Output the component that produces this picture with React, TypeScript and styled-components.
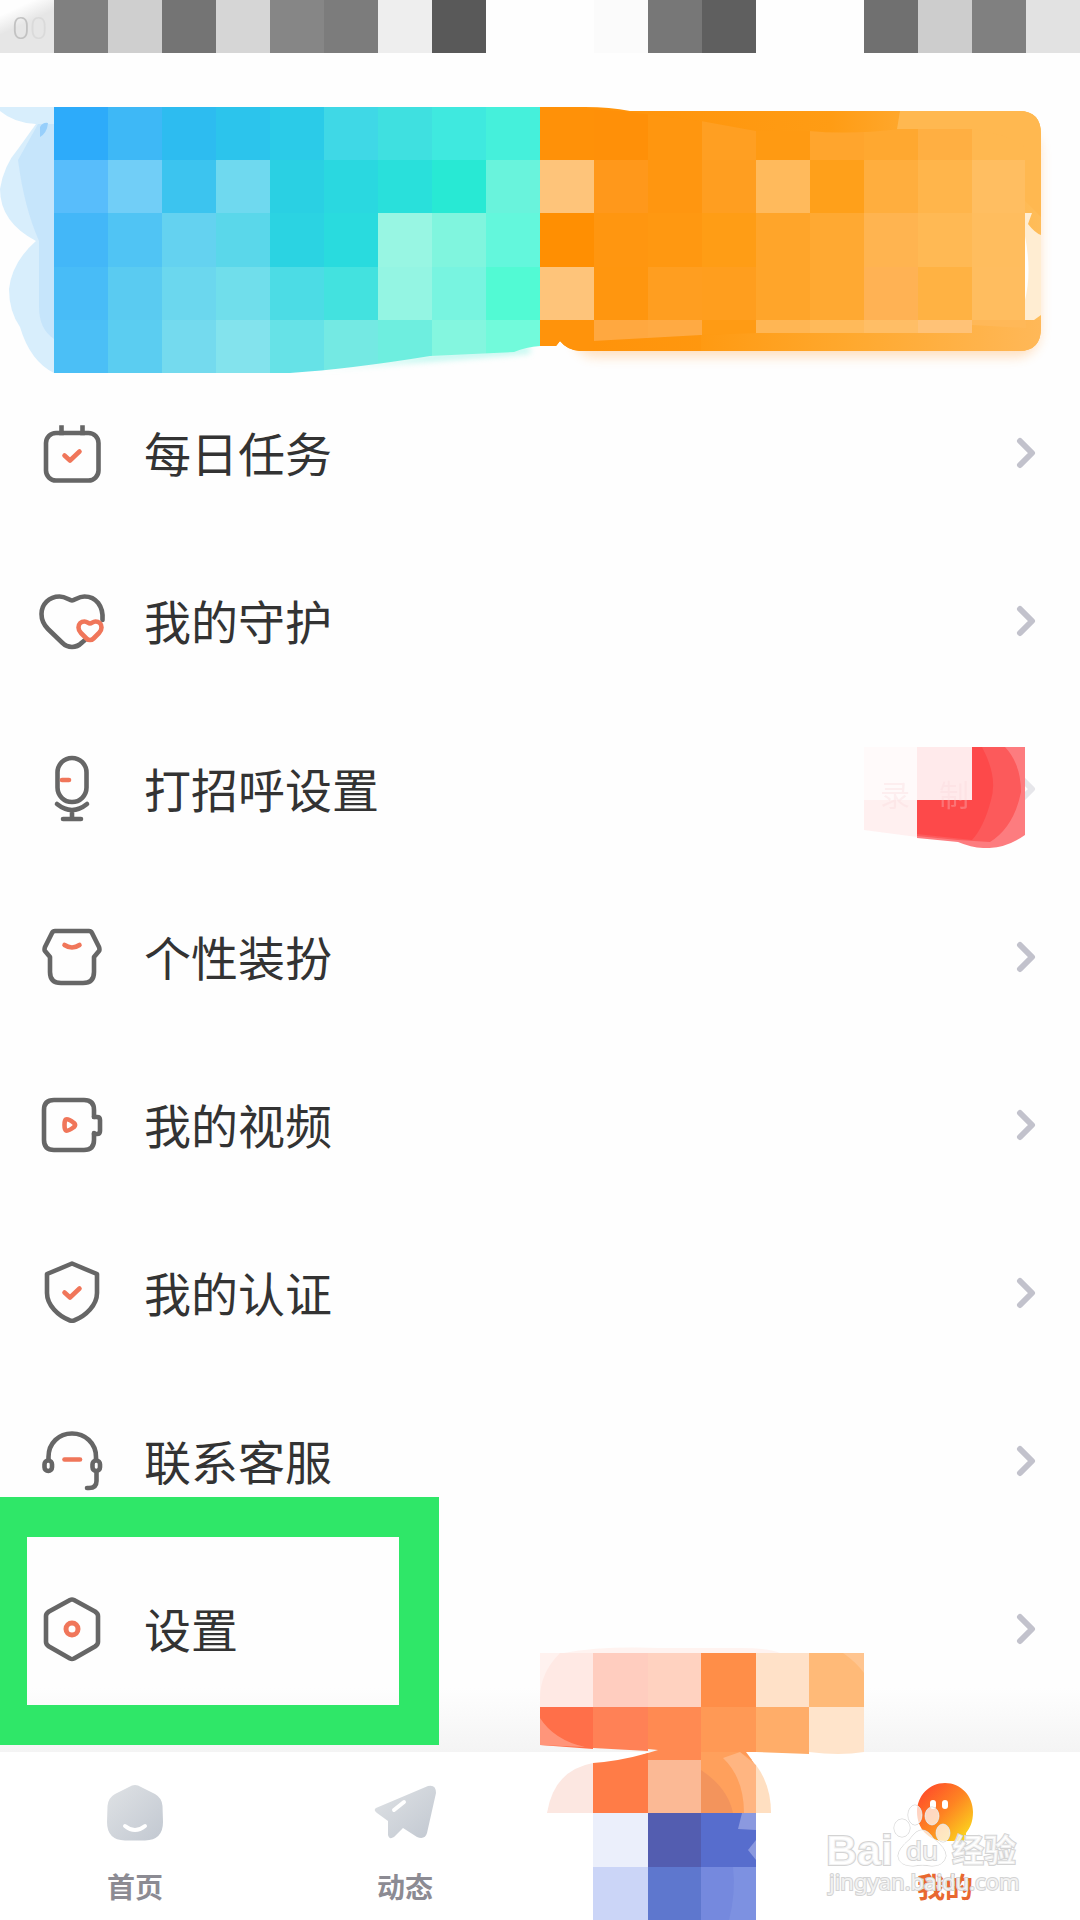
import React from 'react';
import styled, { createGlobalStyle } from 'styled-components';

const GlobalStyle = createGlobalStyle`
  *, *::before, *::after { box-sizing: border-box; }
  body {
    margin: 0;
    background: #fefefe;
    color: #333333;
    font-family: "Noto Sans CJK SC", "Noto Sans", sans-serif;
  }
`;

const Page = styled.div`
  position: relative;
  display: flex;
  flex-direction: column;
  min-height: 100vh;
  overflow: hidden;
`;

const StatusBar = styled.header`
  position: relative;
  display: grid;
  grid-template-columns: repeat(20, 1fr);
  height: 53px;
`;

const StatusCell = styled.div<{ $tone: string }>`
  background: ${(p) => p.$tone};
`;

const Clock = styled.span`
  position: absolute;
  left: 12px;
  top: 8px;
  font: 300 32px/40px Roboto, sans-serif;
  background: linear-gradient(to right, #c2c2c2 16px, #dadada 20px);
  background-clip: text;
  color: transparent;
`;

const Banner = styled.svg`
  position: relative;
  display: block;
  width: 100%;
  height: 262px;
  margin-top: 54px;
  overflow: visible;
`;

const Content = styled.main`
  flex: 1;
  padding-bottom: 39px;
  background: linear-gradient(to top, #f4f4f4, #fefefe 64px);
`;

const Menu = styled.ul`
  list-style: none;
  margin: 0;
  padding: 0;
`;

const MenuItem = styled.li`
  position: relative;
`;

const MenuButton = styled.button`
  display: flex;
  align-items: center;
  width: 100%;
  height: 168px;
  padding: 0 36px;
  border: 0;
  background: none;
  color: inherit;
  font: inherit;
  text-align: left;
  cursor: pointer;
`;

const MenuIcon = styled.svg`
  flex: none;
  width: 72px;
  height: 72px;
  fill: none;
  stroke: #666666;
  stroke-width: 4.6;
  stroke-linecap: round;
  stroke-linejoin: round;

  .accent { stroke: #f0765a; }
`;

const MenuLabel = styled.span`
  flex: 1;
  margin-left: 36px;
  padding-bottom: 2px;
  font-size: 47px;
  line-height: 68px;
`;

const Chevron = styled.svg<{ $faint?: boolean }>`
  flex: none;
  width: 30px;
  height: 36px;
  fill: none;
  stroke: ${(p) => (p.$faint ? '#e6e6ea' : '#c2c2cc')};
  stroke-width: 6;
  stroke-linecap: round;
  stroke-linejoin: round;
`;

const Badge = styled.svg`
  position: absolute;
  top: 42px;
  right: 55px;
  width: 161px;
  height: 101px;
  pointer-events: none;
`;

const Highlight = styled.div`
  position: absolute;
  top: -48px;
  left: 0;
  width: 439px;
  height: 248px;
  border: solid #2fe768;
  border-width: 40px 40px 40px 27px;
  pointer-events: none;
`;

const TabBar = styled.nav`
  position: relative;
  display: grid;
  grid-template-columns: repeat(4, 1fr);
  height: 168px;
  background: #ffffff;
`;

const Tab = styled.a<{ $active?: boolean }>`
  display: flex;
  flex-direction: column;
  align-items: center;
  gap: 20px;
  padding-top: 28px;
  color: ${(p) => (p.$active ? '#e86830' : '#8c8b93')};
  font-size: 28px;
  font-weight: 700;
  line-height: 40px;
  text-decoration: none;
`;

const TabIcon = styled.svg`
  width: 66px;
  height: 66px;
`;

const TabCover = styled.svg`
  position: absolute;
  left: 50%;
  bottom: 0;
  width: 324px;
  height: 272px;
  overflow: visible;
  pointer-events: none;
`;

const Watermark = styled.svg`
  position: absolute;
  right: 56px;
  bottom: 27px;
  width: 200px;
  height: 104px;
  overflow: visible;
  pointer-events: none;
`;

const STATUS_TONES = [
  'linear-gradient(155deg, #fefefe 20%, #e6e6e6 45%)', '#808080', '#cfcfcf', '#747474', '#d6d6d6',
  '#868686', '#7c7c7c', '#eeeeee', '#595959', '#fefefe',
  '#fefefe', '#fbfbfb', '#777777', '#5f5f5f', '#fefefe',
  '#fefefe', '#707070', '#cdcdcd', '#808080', '#e2e2e2',
];

const ROW_EDGES = [0, 53, 106, 160, 213, 266];

const BLUE = [
  ['#2dabfa', '#3eb8f6', '#2dbcf0', '#2cc4ec', '#2bcbe8', '#3fd8e6', '#3fe0e0', '#3fe9df', '#45f0db'],
  ['#58bdfb', '#71cef7', '#3cc4ef', '#6fd9ef', '#2ad0e3', '#2ad8e0', '#29e0db', '#28e9d4', '#69f3dc'],
  ['#43b7f8', '#50c4f4', '#64d2f0', '#5ad7ea', '#2bd3e2', '#29dbde', '#98f6e3', '#80f5de', '#63f7dc'],
  ['#48bcf7', '#5acbf1', '#6bd7ee', '#70deeb', '#4cdce5', '#43e2df', '#94f5e3', '#78f4e0', '#52fad4'],
  ['#4bbff6', '#5bcdf1', '#74daee', '#83e3ed', '#66e2e7', '#74e9e3', '#6eeedf', '#84f6df', '#72fadb'],
];

const ORANGE = [
  ['#ff9108', '#ff9008', '#ff960f', '#ff9f22', '#ff9a12', '#ffa52d', '#ffa830', '#ffaf42', '#ffb850'],
  ['#fec47a', '#ff981b', '#ff9610', '#ff9e20', '#ffba5c', '#ffa01a', '#ffae3e', '#ffb54b', '#ffbe61'],
  ['#ff8f02', '#ff9610', '#ff9811', '#ff9d15', '#ffa52a', '#ffa932', '#ffb450', '#ffb954', '#ffbd5e'],
  ['#fec47a', '#ff960f', '#ff9e20', '#ff9e1e', '#ffa52a', '#ffa932', '#ffb254', '#ffb243', '#ffbd5f'],
  ['#ff930b', '#ffa840', '#ffaa43', '#ff9b14', '#ffb654', '#ffba5a', '#ffbe66', '#ffc277', '#ffb858'],
];

function Tiles({ rows, left }: { rows: string[][]; left: number }) {
  return (
    <>
      {rows.map((row, r) =>
        row.map((fill, c) => (
          <rect
            key={`${r}-${c}`}
            x={left + c * 54}
            y={ROW_EDGES[r]}
            width={54}
            height={ROW_EDGES[r + 1] - ROW_EDGES[r]}
            fill={fill}
            shapeRendering="crispEdges"
          />
        )),
      )}
    </>
  );
}

function BannerArt() {
  return (
    <Banner viewBox="0 0 1080 262" preserveAspectRatio="none" aria-hidden="true">
      <defs>
        <linearGradient id="orangeCard" x1="0" x2="1" y1="0" y2="0">
          <stop offset="0" stopColor="#ff9108" />
          <stop offset="0.58" stopColor="#ff9c14" />
          <stop offset="1" stopColor="#ffbd5a" />
        </linearGradient>
        <linearGradient id="orangeFoot" x1="0" x2="1" y1="0" y2="0">
          <stop offset="0" stopColor="#ff9a12" />
          <stop offset="0.45" stopColor="#ffa92f" />
          <stop offset="1" stopColor="#ffb858" />
        </linearGradient>
        <clipPath id="blueClip">
          <path d="M54 0 H540 V239 Q526 240 514 245 L430 249 Q350 262 290 266 H54 Z" />
        </clipPath>
        <clipPath id="orangeTiles">
          <path d="M540 0 L620 4 L701 14 L756 24 L809 24 Q850 28 900 22 L972 22 Q1010 28 1025 40 V213 H1041 V222 L972 218 V226 H756 L701 228 V228 L593 234 V244 H540 Z" />
        </clipPath>
        <clipPath id="orangeCardClip">
          <path d="M540 0 H585 Q610 0 630 4 H1019 Q1041 4 1041 27 V221 Q1041 244 1019 244 H580 Q567 243 560 234 L556 239 H540 Z" />
        </clipPath>
        <filter id="cardShadow" x="-5%" y="-5%" width="110%" height="120%">
          <feGaussianBlur stdDeviation="6" />
        </filter>
        <filter id="greenGlow" x="-5%" y="-20%" width="110%" height="140%">
          <feGaussianBlur stdDeviation="3" />
        </filter>
      </defs>
      <path d="M0 0 H54 V266 Q30 254 20 220 Q9 204 9 182 Q12 155 36 134 Q0 115 0 82 Q4 58 18 42 L36 17 Q14 16 0 4 Z" fill="#d8eefc" />
      <path d="M38 17 H54 V232 Q39 222 39 200 V134 Q24 100 18 53 Z" fill="#bfe1fb" opacity="0.7" />
      <path d="M40 30 V20 Q43 15 48 16 Q47 26 40 30" fill="#97cffb" />
      <rect x="572" y="20" width="468" height="230" rx="24" fill="#ff9a30" opacity="0.3" filter="url(#cardShadow)" />
      <path d="M290 264 Q350 260 430 248 L530 240 V246 L430 254 Z" fill="#6ff0dd" opacity="0.5" filter="url(#greenGlow)" />
      <g clipPath="url(#blueClip)"><Tiles rows={BLUE} left={54} /></g>
      <g clipPath="url(#orangeCardClip)">
        <rect x="540" width="501" height="244" fill="url(#orangeCard)" />
        <path d="M900 4 H1041 V110 L972 40 L897 22 Z" fill="#ffb850" />
        <rect x="701" y="213" width="340" height="31" fill="url(#orangeFoot)" />
        <g clipPath="url(#orangeTiles)"><Tiles rows={ORANGE} left={540} /></g>
        <path d="M1025 106 H1032 L1028 117 Q1035 126 1041 128 V208 L1034 213 H1025 Z" fill="#ffedd2" />
        <path d="M1025 129 Q1032 165 1025 193 Z" fill="#ffffff" />
      </g>
    </Banner>
  );
}

const Check = () => <path className="accent" d="M28.5 38.5 L34 43.5 L43.5 34.5" />;

const ICONS = {
  calendar: (
    <>
      <rect x="10" y="16" width="52.500" height="47.500" rx="10" />
      <path d="M25.5 10.5 V16 M46.500 10.5 V16" strokeLinecap="square" />
      <Check />
    </>
  ),
  heart: (
    <>
      <path d="M66.5 35 C67.5 21 60 11.5 48.5 11.5 C42 11.5 39 15.5 36 15.5 C33 15.5 30 11.5 23.5 11.5 C13 11.5 5.5 19.5 5.5 29 C5.5 36 8 40 12 44 L26 57.5 C32 63.5 40 63.5 46 57.5 L49 55" />
      <path className="accent" d="M54 38.5 C52 38.5 51.5 36.5 48.5 36.5 C45 36.5 42.5 39 42.5 42.5 C42.5 45 43.5 46.5 45 48 L50.5 53.5 C52.5 55.5 55.5 55.5 57.5 53.5 L63 48 C64.5 46.5 65.5 45 65.5 42.5 C65.5 39 63 36.5 59.5 36.5 C56.5 36.5 56 38.5 54 38.5 Z" />
    </>
  ),
  mic: (
    <>
      <rect x="21.5" y="5" width="29" height="44" rx="14.5" />
      <path d="M21 51 Q36 63 51 51 M36 58 V66 M27 66 H45" />
      <path className="accent" d="M26 27 H33" />
    </>
  ),
  shirt: (
    <>
      <path d="M19 10 H53 Q55 10 56 12 L63 26 Q64 29 63 30 L58 36 V51 Q58 62 47 62 H25 Q14 62 14 51 V36 L9 30 Q8 29 9 26 L16 12 Q17 10 19 10 Z" />
      <path className="accent" d="M28.5 24 Q36 29 43.5 24" />
    </>
  ),
  video: (
    <>
      <path d="M58 28 V21 Q58 11 48 11 H18 Q8 11 8 21 V51 Q8 61 18 61 H48 Q58 61 58 51 V44" />
      <path d="M58 28 H61 Q64 28 64 31 V42 Q64 45 61 45 H58" />
      <path className="accent" d="M30 30.5 Q32 29.5 38 34 Q40 36 38 38 Q32 42.5 30 41.5 Q28.5 41 28.5 36 Q28.5 31 30 30.5 Z" />
    </>
  ),
  shield: (
    <>
      <path d="M36 6.5 L61 17 V36 C61 48 50 59 38 63.5 Q36 64 34 63.5 C22 59 11 48 11 36 V17 Z" />
      <path className="accent" d="M28.5 35.5 L34 40.5 L43.5 31.5" />
    </>
  ),
  headset: (
    <>
      <path d="M12.5 34 V32 C12.5 18 23 8.5 36 8.5 C49 8.5 60 18 60 32 V34" />
      <rect x="8.5" y="35.5" width="7.5" height="10.5" rx="3.7" />
      <rect x="56.5" y="35.5" width="7.5" height="10.5" rx="3.7" />
      <path d="M60.5 48 V56 Q60.5 63 53 63 H51" />
      <path className="accent" d="M28.5 34.5 H44" />
    </>
  ),
  hexagon: (
    <>
      <path d="M34 7 Q36 6 38 7 L59 18.5 Q62 20.5 62 23 V49 Q62 51.5 59 53.5 L38 65.5 Q36 66.5 34 65.5 L13 53.5 Q10 51.5 10 49 V23 Q10 20.5 13 18.5 Z" />
      <circle className="accent" cx="36" cy="36" r="6" strokeWidth="5" />
    </>
  ),
};

type MenuEntry = { label: string; icon: keyof typeof ICONS; badge?: boolean; highlighted?: boolean };

const MENU: MenuEntry[] = [
  { label: '每日任务', icon: 'calendar' },
  { label: '我的守护', icon: 'heart' },
  { label: '打招呼设置', icon: 'mic', badge: true },
  { label: '个性装扮', icon: 'shirt' },
  { label: '我的视频', icon: 'video' },
  { label: '我的认证', icon: 'shield' },
  { label: '联系客服', icon: 'headset' },
  { label: '设置', icon: 'hexagon', highlighted: true },
];

function RecordBadge() {
  return (
    <Badge viewBox="0 0 161 101" aria-hidden="true">
      <rect width="53" height="53" fill="#fffafa" />
      <path d="M0 53 H53 V90 L0 83 Z" fill="#fff0f0" />
      <rect x="53" width="55" height="53" fill="#ffeaeb" />
      <path d="M108 0 H161 V88 Q130 110 94 95 L53 91 V53 H108 Z" fill="#fd7c7f" />
      <path d="M108 0 H141 Q157 17 157 45 Q150 80 126 95 L94 93 L53 89 V53 H108 Z" fill="#fc5a5b" />
      <path d="M108 0 H118 Q134 30 127 53 Q120 80 108 93 L53 87 V53 H108 Z" fill="#fd4243" opacity="0.7" />
      <text x="16 75" y="59" fontSize="30" fill="#f9d5d8" opacity="0.3">录制</text>
    </Badge>
  );
}

function CenterTabCover() {
  return (
    <TabCover viewBox="0 0 324 272" aria-hidden="true">
      <path d="M24 5 Q60 -2 120 0 H200 Q230 0 240 5 Z" fill="#fff3f0" />
      <g shapeRendering="crispEdges">
        <rect y="5" width="53" height="54" fill="#ffe9e4" />
        <rect x="53" y="5" width="55" height="54" fill="#ffcdbf" />
        <rect x="108" y="5" width="53" height="54" fill="#ffd2c0" />
        <rect x="161" y="5" width="55" height="54" fill="#ff8e48" />
        <rect x="216" y="5" width="53" height="54" fill="#ffe1c8" />
        <rect x="269" y="5" width="55" height="54" fill="#ffba78" />
      </g>
      <path d="M0 5 H20 Q0 25 0 50 Z" fill="#fff2ef" />
      <path d="M303 5 H324 V25 Q316 14 303 5 Z" fill="#ffc590" />
      <path d="M0 59 H53 V101 L0 97 Z" fill="#ff6f49" />
      <path d="M0 70 Q14 92 45 99 L0 97 Z" fill="#ff957a" />
      <path d="M53 59 H108 V103 L53 100 Z" fill="#ff8156" />
      <path d="M108 59 H161 V112 H92 Q100 107 118 102 L108 101 Z" fill="#ff8a52" />
      <path d="M161 59 H216 V104 H206 L212 112 H161 Z" fill="#ff9955" />
      <path d="M216 59 H269 V106 L216 104 Z" fill="#ffad69" />
      <path d="M269 59 H324 V104 Q300 108 269 104 Z" fill="#ffe4cb" />
      <path d="M7 165 Q14 122 53 115 V165 Z" fill="#fce7e1" />
      <path d="M53 165 V115 Q80 113 108 105 V165 Z" fill="#ff7c47" />
      <rect x="108" y="112" width="53" height="53" fill="#fbb995" />
      <path d="M161 165 V104 H200 Q216 112 216 122 V165 Z" fill="#ffa05c" />
      <path d="M161 122 Q188 140 193 165 H161 Z" fill="#f3945c" />
      <path d="M204 165 Q204 130 183 110 L200 104 L216 117 V165 Z" fill="#ffb581" />
      <path d="M216 117 Q231 137 231 165 H216 Z" fill="#ffdfc1" />
      <g shapeRendering="crispEdges">
        <rect x="53" y="165" width="55" height="54" fill="#ebeffb" />
        <rect x="108" y="165" width="53" height="54" fill="#535db0" />
        <rect x="161" y="165" width="55" height="54" fill="#576dcd" />
        <rect x="53" y="219" width="55" height="53" fill="#cbd5f7" />
        <rect x="108" y="219" width="53" height="53" fill="#5e77ce" />
        <rect x="161" y="219" width="55" height="53" fill="#7589de" />
      </g>
      <path d="M202 165 H216 V182 L198 181 Z" fill="#8b99df" />
      <path d="M216 192 L208 202 L216 212 Z" fill="#8b99df" />
      <path d="M193 219 H216 V272 H189 Q196 245 193 219 Z" fill="#7d91e1" />
    </TabCover>
  );
}

function BaiduWatermark() {
  const outline = { fill: '#ffffff', fillOpacity: 0.72, stroke: '#d3d3d3', strokeWidth: 1, paintOrder: 'stroke' as const };
  return (
    <Watermark viewBox="0 0 200 104" aria-hidden="true">
      <g {...outline}>
        <ellipse cx="91" cy="26" rx="7" ry="10" />
        <ellipse cx="78" cy="39" rx="8" ry="9" />
        <ellipse cx="108" cy="27" rx="7" ry="9" />
        <ellipse cx="119" cy="44" rx="7" ry="9" />
        <path d="M98 41 Q104 41 109 49 Q122 59 122 67 Q120 77 108 77 Q98 75 89 77 Q75 77 74 67 Q74 60 86 50 Q92 41 98 41 Z" />
      </g>
      <g {...outline} strokeWidth={2}>
        <text x="2" y="76" fontFamily="Liberation Sans, sans-serif" fontWeight="700" fontSize="43">Bai</text>
        <text x="82" y="71" fontFamily="Noto Sans, sans-serif" fontWeight="400" fontSize="26">du</text>
        <text x="128" y="73" fontWeight="700" fontSize="32">经验</text>
        <text x="5" y="101" fontFamily="Noto Sans, sans-serif" fontSize="22">jingyan.baidu.com</text>
      </g>
    </Watermark>
  );
}

export default function App() {
  return (
    <Page>
      <GlobalStyle />
      <StatusBar>
        {STATUS_TONES.map((tone, i) => (
          <StatusCell key={i} $tone={tone} />
        ))}
        <Clock>00</Clock>
      </StatusBar>
      <BannerArt />
      <Content>
        <Menu>
          {MENU.map((item) => (
            <MenuItem key={item.label}>
              <MenuButton type="button">
                <MenuIcon viewBox="0 0 72 72" aria-hidden="true">{ICONS[item.icon]}</MenuIcon>
                <MenuLabel>{item.label}</MenuLabel>
                <Chevron $faint={item.badge} viewBox="0 0 30 36" aria-hidden="true">
                  <path d="M6 6 L18 18 L6 30" />
                </Chevron>
              </MenuButton>
              {item.badge && <RecordBadge />}
              {item.highlighted && <Highlight />}
            </MenuItem>
          ))}
        </Menu>
      </Content>
      <TabBar>
        <Tab href="#home">
          <TabIcon viewBox="0 0 66 66" aria-hidden="true">
            <defs>
              <linearGradient id="greyTab" x1="0" y1="0" x2="1" y2="1">
                <stop offset="0" stopColor="#dfe2e5" />
                <stop offset="1" stopColor="#c2c8d1" />
              </linearGradient>
            </defs>
            <path d="M27 7 Q33 3 39 7 L53 14 Q60 18 60.5 26 L61 42 Q61 60 43 60.5 H23 Q5 60 5 42 L5.5 26 Q6 18 13 14 Z" fill="url(#greyTab)" />
            <path d="M23 46 Q33 54 43 46" fill="none" stroke="#fff" strokeWidth="4" strokeLinecap="round" />
          </TabIcon>
          首页
        </Tab>
        <Tab href="#moments">
          <TabIcon viewBox="0 0 66 66" aria-hidden="true">
            <path d="M4 28 L56 6 Q64 4 64 13 L55 53 Q53 60 45 57 L31 48 L22 57 Q17 60 16 55 V41 L5 33 Q1 30 4 28 Z" fill="url(#greyTab)" />
            <path d="M22 30 L32 22" stroke="#fff" strokeWidth="4" strokeLinecap="round" />
          </TabIcon>
          动态
        </Tab>
        <span />
        <Tab href="#mine" $active>
          <TabIcon viewBox="0 0 66 66" aria-hidden="true">
            <defs>
              <linearGradient id="mineTab" x1="0.1" y1="0.1" x2="0.9" y2="0.9">
                <stop offset="0" stopColor="#ff4c2a" />
                <stop offset="0.5" stopColor="#fe8422" />
                <stop offset="1" stopColor="#fbd31e" />
              </linearGradient>
            </defs>
            <path d="M33 3 C49 3 61 16 61 32 C61 42 58 48 54 53 V57 Q54 61 49 61 H33 C16 61 5 48 5 32 C5 16 17 3 33 3 Z" fill="url(#mineTab)" />
            <rect x="18" y="20" width="6" height="9" rx="3" fill="#fff" />
            <rect x="30" y="20" width="6" height="9" rx="3" fill="#fff" />
          </TabIcon>
          我的
        </Tab>
        <CenterTabCover />
      </TabBar>
      <BaiduWatermark />
    </Page>
  );
}
